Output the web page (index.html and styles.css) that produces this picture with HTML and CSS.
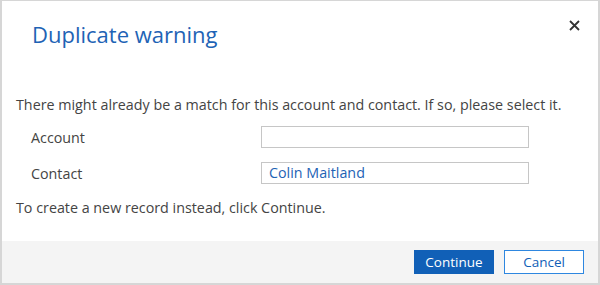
FILE: index.html
```html
<!DOCTYPE html>
<html lang="en">
<head>
  <meta charset="UTF-8">
  <title>Duplicate warning</title>
  <link rel="stylesheet" href="styles.css">
</head>
<body>
  <div class="dialog">
    <div class="header">
      <h1 class="title">Duplicate warning</h1>
      <button class="close" aria-label="Close">
        <svg width="11" height="11" viewBox="0 0 11 11"><path d="M1 1L10 10M10 1L1 10" stroke="#333" stroke-width="1.8"/></svg>
      </button>
    </div>

    <div class="content">
      <p class="intro">There might already be a match for this account and contact. If so, please select it.</p>
      <div class="fields">
        <label class="label">Account</label>
        <div class="input"></div>
        <label class="label">Contact</label>
        <div class="input"><span class="link">Colin Maitland</span></div>
      </div>
      <p class="note">To create a new record instead, click Continue.</p>
    </div>

    <div class="footer">
      <button class="btn primary">Continue</button>
      <button class="btn secondary">Cancel</button>
    </div>
  </div>
</body>
</html>
```

FILE: styles.css
```css
/* General */
body {
  margin: 0;
  font-family: "Open Sans", "Noto Sans", sans-serif;
  color: #444;
  background: #fff;
}
.dialog {
  width: 600px;
  height: 285px;
  box-sizing: border-box;
  border: 2px solid #d6d6d6;
  border-top-width: 1px;
  display: flex;
  flex-direction: column;
  background: #fff;
}
/* Header */
.header {
  display: flex;
  justify-content: space-between;
  align-items: flex-start;
  padding: 17px 18px 0 30px;
}
.title {
  margin: 0;
  font-size: 22px;
  font-weight: 400;
  line-height: 32px;
  color: #1e63b5;
}
.close {
  border: none;
  background: none;
  padding: 0;
  margin-top: 2px;
  cursor: pointer;
  line-height: 0;
}
/* Content */
.content {
  padding: 0 14px;
  font-size: 14.3px;
}
.intro {
  margin: 45px 0 0;
  line-height: 20px;
}
.fields {
  display: grid;
  grid-template-columns: 230px 268px;
  grid-auto-rows: 22px;
  row-gap: 14px;
  align-items: center;
  margin-top: 11px;
  padding-left: 15px;
}
.input {
  height: 22px;
  box-sizing: border-box;
  border: 1px solid #c6c6c6;
  padding: 0 7px;
  line-height: 20px;
}
.link {
  color: #1e63b5;
}
.note {
  margin: 14px 0 0;
  line-height: 20px;
}
/* Footer */
.footer {
  margin-top: auto;
  height: 42px;
  background: #f4f4f4;
  display: flex;
  justify-content: flex-end;
  align-items: flex-start;
  gap: 10px;
  padding: 9px 14px 0 0;
  box-sizing: border-box;
}
.btn {
  width: 80px;
  height: 24px;
  font-family: inherit;
  font-size: 13.5px;
  border: 1px solid #1160b7;
  cursor: pointer;
}
.primary {
  background: #1160b7;
  color: #fff;
}
.secondary {
  background: #fff;
  color: #1160b7;
  border-color: #2e87e0;
}
```
